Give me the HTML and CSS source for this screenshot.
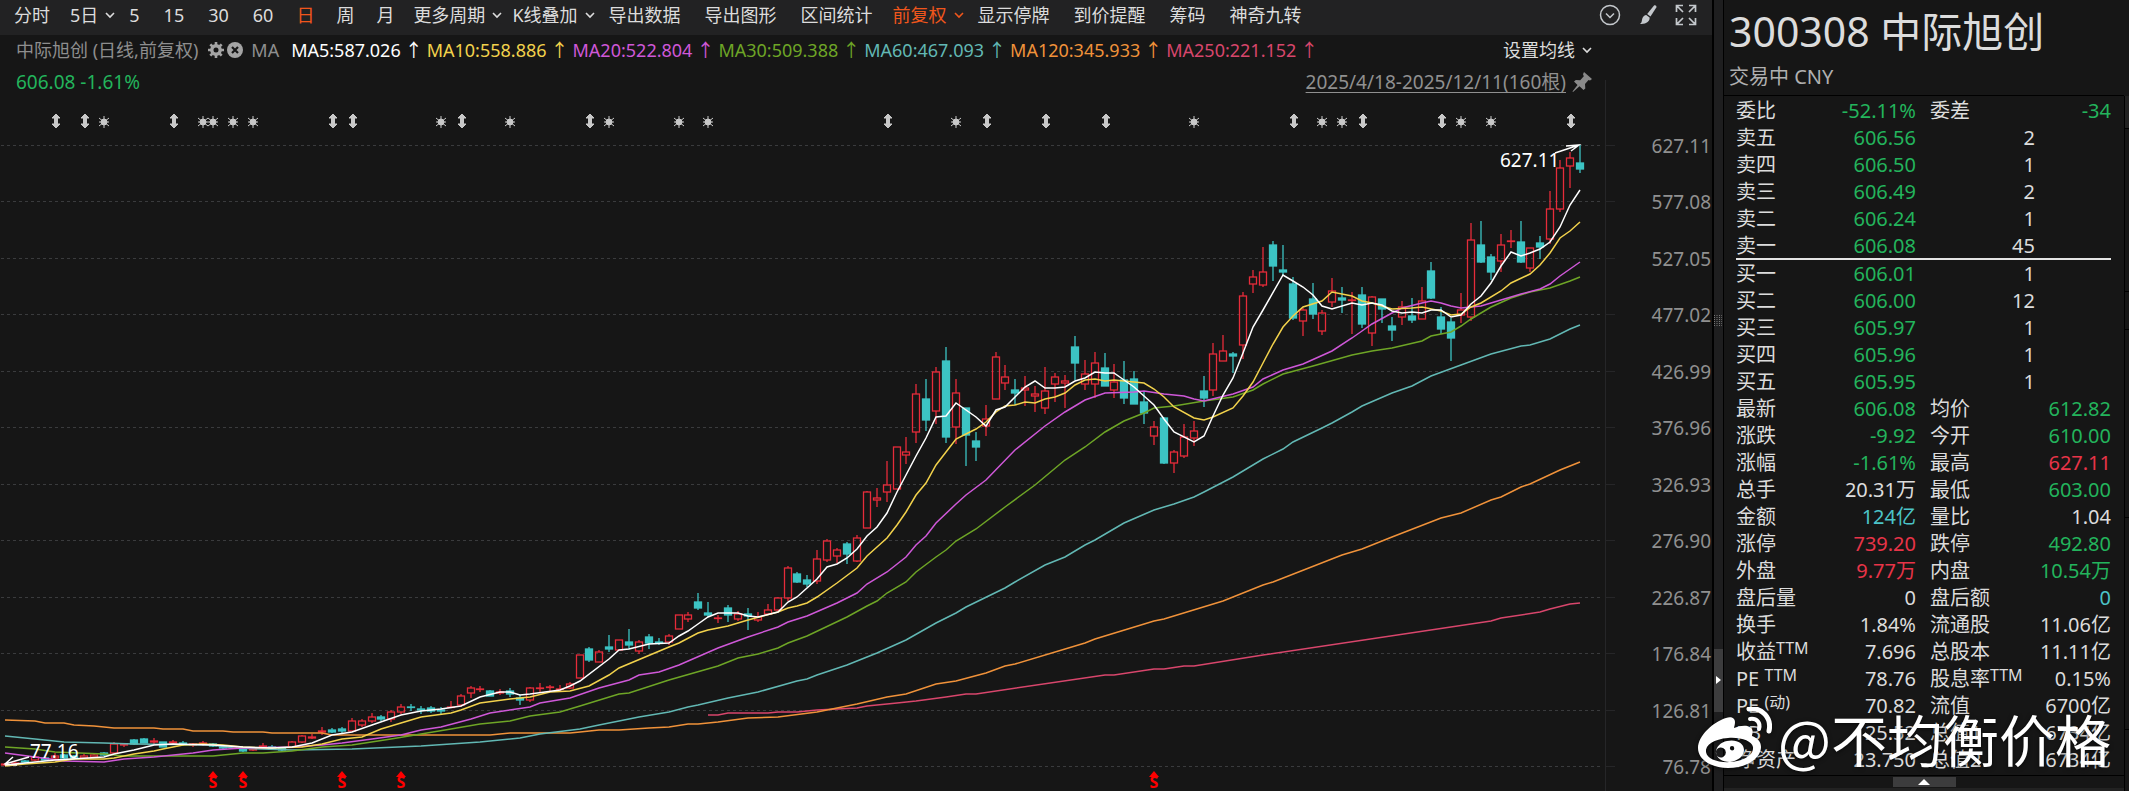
FILE: index.html
```html
<!DOCTYPE html>
<html lang="zh-CN">
<head>
<meta charset="UTF-8">
<title>300308 中际旭创</title>
<link rel="stylesheet" href="styles.css">
</head>
<body>
<svg class="defs" aria-hidden="true">
  <symbol id="chev" viewBox="0 0 10 10"><path d="M1 3l4 4 4-4" fill="none" stroke="currentColor" stroke-width="1.6"/></symbol>
</svg>
<div class="app">
  <main class="chart">
    <nav class="toolbar">
      <button class="tab">分时</button>
      <button class="tab drop">5日<svg class="chev"><use href="#chev"/></svg></button>
      <button class="tab">5</button>
      <button class="tab">15</button>
      <button class="tab">30</button>
      <button class="tab">60</button>
      <button class="tab period active">日</button>
      <button class="tab period">周</button>
      <button class="tab period">月</button>
      <button class="tab drop">更多周期<svg class="chev"><use href="#chev"/></svg></button>
      <button class="tab drop">K线叠加<svg class="chev"><use href="#chev"/></svg></button>
      <button class="tab">导出数据</button>
      <button class="tab">导出图形</button>
      <button class="tab">区间统计</button>
      <button class="tab drop active">前复权<svg class="chev"><use href="#chev"/></svg></button>
      <button class="tab">显示停牌</button>
      <button class="tab">到价提醒</button>
      <button class="tab">筹码</button>
      <button class="tab">神奇九转</button>
      <div class="tools">
        <button class="tool" aria-label="更多">
          <svg viewBox="0 0 22 22" fill="none" stroke="currentColor" stroke-width="1.5"><circle cx="11" cy="11" r="9.5"/><path d="M7 9.5l4 4 4-4"/></svg>
        </button>
        <button class="tool" aria-label="画线">
          <svg viewBox="0 0 22 22" fill="currentColor"><path d="M17 1.5c1.5-.8 3 .5 2.3 2L13.5 12.5l-3.300-2.5z"/><path d="M9.2 11l3.4 2.6c.5 3.5-3.5 7-9.6 6.4 2.3-1.5 1.6-3.5 2.4-5.7.7-1.9 2.2-3 3.8-3.3z"/></svg>
        </button>
        <button class="tool" aria-label="全屏">
          <svg viewBox="0 0 22 22" fill="none" stroke="currentColor" stroke-width="1.7"><path d="M1.5 8V1.5H8M2 2l6 6M14 1.5h6.5V8M20 2l-6 6M1.5 14v6.500H8M2 20l6-6M14 20.5h6.5V14M20 20l-6-6"/></svg>
        </button>
      </div>
    </nav>

    <div class="ma-row">
      <span class="name">中际旭创 (日线,前复权)</span>
      <button class="mini" aria-label="设置">
        <svg viewBox="0 0 16 16"><circle cx="8" cy="8" r="4.2" fill="none" stroke="currentColor" stroke-width="3.4"/><path d="M8 0v3M8 13v3M0 8h3M13 8h3M2.3 2.3l2.2 2.2M11.5 11.5l2.2 2.2M2.3 13.7l2.2-2.2M11.5 4.5l2.2-2.2" stroke="currentColor" stroke-width="2.6"/></svg>
      </button>
      <button class="mini" aria-label="关闭">
        <svg viewBox="0 0 16 16"><circle cx="8" cy="8" r="8" fill="currentColor"/><path d="M5 5l6 6M11 5l-6 6" stroke="#161616" stroke-width="2.2"/></svg>
      </button>
      <span class="ma-name">MA</span>
      <span class="ma5">MA5:587.026<i>↑</i></span>
      <span class="ma10">MA10:558.886<i>↑</i></span>
      <span class="ma20">MA20:522.804<i>↑</i></span>
      <span class="ma30">MA30:509.388<i>↑</i></span>
      <span class="ma60">MA60:467.093<i>↑</i></span>
      <span class="ma120">MA120:345.933<i>↑</i></span>
      <span class="ma250">MA250:221.152<i>↑</i></span>
      <button class="set-ma">设置均线<svg class="chev"><use href="#chev"/></svg></button>
    </div>

    <div class="info-row">
      <span class="down">606.08 -1.61%</span>
      <a class="range" href="#range">2025/4/18-2025/12/11(160根)</a>
      <svg class="pin" viewBox="0 0 20 20"><path d="M12 0l8 7-2 1.5-1.5-.5-3.5 4 .3 4.5-1.8 1.5-4-3.800L1 20l-.5-.5 5-6.5L2 9.5 3.8 8l4.4.2 3.6-4-.8-2z" fill="currentColor"/></svg>
    </div>

    <svg class="stage" id="stage"></svg>
  </main>

  <div class="splitter">
    <svg class="grip" viewBox="0 0 8 12"><path d="M.5 0v12M3 0v12M5.5 0v12M7.8 0v12" stroke="#777" stroke-dasharray="1 1"/></svg>
    <button class="fold" aria-label="收起侧栏"><svg viewBox="0 0 5 8"><path d="M0 0l5 4-5 4z" fill="#fff"/></svg></button>
  </div>

  <aside class="panel">
    <header class="head">
      <h1>300308 中际旭创</h1>
      <p>交易中 CNY</p>
    </header>
    <div class="quotes">
      <table class="quote">
        <colgroup><col class="c1"><col class="c2"><col class="c3"><col class="c4"></colgroup>
        <tbody>
          <tr><th>委比</th><td class="down">-52.11%</td><th>委差</th><td class="down">-34</td></tr>
          <tr><th>卖五</th><td class="down">606.56</td><td class="vol" colspan="2">2</td></tr>
          <tr><th>卖四</th><td class="down">606.50</td><td class="vol" colspan="2">1</td></tr>
          <tr><th>卖三</th><td class="down">606.49</td><td class="vol" colspan="2">2</td></tr>
          <tr><th>卖二</th><td class="down">606.24</td><td class="vol" colspan="2">1</td></tr>
          <tr><th>卖一</th><td class="down">606.08</td><td class="vol" colspan="2">45</td></tr>
        </tbody>
      </table>
      <table class="quote bids">
        <colgroup><col class="c1"><col class="c2"><col class="c3"><col class="c4"></colgroup>
        <tbody>
          <tr><th>买一</th><td class="down">606.01</td><td class="vol" colspan="2">1</td></tr>
          <tr><th>买二</th><td class="down">606.00</td><td class="vol" colspan="2">12</td></tr>
          <tr><th>买三</th><td class="down">605.97</td><td class="vol" colspan="2">1</td></tr>
          <tr><th>买四</th><td class="down">605.96</td><td class="vol" colspan="2">1</td></tr>
          <tr><th>买五</th><td class="down">605.95</td><td class="vol" colspan="2">1</td></tr>
          <tr><th>最新</th><td class="down">606.08</td><th>均价</th><td class="down">612.82</td></tr>
          <tr><th>涨跌</th><td class="down">-9.92</td><th>今开</th><td class="down">610.00</td></tr>
          <tr><th>涨幅</th><td class="down">-1.61%</td><th>最高</th><td class="up">627.11</td></tr>
          <tr><th>总手</th><td>20.31万</td><th>最低</th><td class="down">603.00</td></tr>
          <tr><th>金额</th><td class="cyan">124亿</td><th>量比</th><td>1.04</td></tr>
          <tr><th>涨停</th><td class="up">739.20</td><th>跌停</th><td class="down">492.80</td></tr>
          <tr><th>外盘</th><td class="up">9.77万</td><th>内盘</th><td class="down">10.54万</td></tr>
          <tr><th>盘后量</th><td>0</td><th>盘后额</th><td class="cyan">0</td></tr>
          <tr><th>换手</th><td>1.84%</td><th>流通股</th><td>11.06亿</td></tr>
          <tr><th>收益<sup>TTM</sup></th><td>7.696</td><th>总股本</th><td>11.11亿</td></tr>
          <tr><th>PE <sup>TTM</sup></th><td>78.76</td><th>股息率<sup>TTM</sup></th><td>0.15%</td></tr>
          <tr><th>PE <sup>(动)</sup></th><td>70.82</td><th>流值</th><td>6700亿</td></tr>
          <tr><th>PB</th><td>25.52</td><th>总值1</th><td>6734亿</td></tr>
          <tr><th>净资产</th><td>23.750</td><th>总值2</th><td>6734亿</td></tr>
        </tbody>
      </table>
    </div>
    <div class="drawer">
      <button class="pull" aria-label="展开"><svg viewBox="0 0 12 6"><path d="M0 6l6-6 6 6z" fill="#fff"/></svg></button>
    </div>
  </aside>

  <div class="edge"><span></span><span></span><span></span><span></span><span></span></div>

  <div class="watermark">
    <svg viewBox="0 0 74 62">
      <path fill="#fff" fill-rule="evenodd" d="M28 11c5-2 9 0 9 4 0 3-1 5-1 6 5-2 13-4 17 0 3 3 1 6 1 8 5 2 9 5 9 11 0 11-14 21-33 21C14 61 0 53 0 41c0-12 15-26 28-30zM30 31C16 32 7 38 8 45s12 11 25 10c14-1 23-8 22-15-1-6-12-10-25-9z"/>
      <path fill="#fff" fill-rule="evenodd" d="M29 34c9-2 17 2 17 9 0 6-6 11-14 12-8 0-14-4-14-10 0-5 5-10 11-11zM25 41a5 5 0 1 0 .1 9 5 5 0 0 0-.1-9zM34 39a2.2 2.2 0 1 0 .1 4.4 2.2 2.2 0 0 0-.1-4.4z"/>
      <path fill="none" stroke="#fff" stroke-width="5" stroke-linecap="round" d="M51 2c13-2 23 9 20 22"/>
      <path fill="none" stroke="#fff" stroke-width="4" stroke-linecap="round" d="M52 12c7-1 11 4 9 10"/>
    </svg>
    <span>@不均衡价格</span>
  </div>
</div>
<script src="chart.js"></script>
</body>
</html>
```
FILE: styles.css
```css
* {
  box-sizing: border-box;
}
body {
  margin: 0;
  background: #161616;
  color: #dcdcdc;
  font-family: "Noto Sans", "Noto Sans CJK SC", sans-serif;
  font-size: 18px;
  overflow: hidden;
}
button {
  border: none;
  background: none;
  padding: 0;
  color: inherit;
  font: inherit;
  cursor: pointer;
}
.defs {
  display: none;
}
.app {
  position: relative;
  display: flex;
  height: 100vh;
}
.down { color: #23b45c; }
.up { color: #e83448; }
.cyan { color: #4cc4c8; }

/* chart side */
.chart {
  flex: 1;
  min-width: 0;
  display: flex;
  flex-direction: column;
  border-right: 1px solid #000;
}
.toolbar {
  display: flex;
  flex: none;
  height: 35px;
  padding: 0 15px 5px 2px;
  background: #222223;
}
.tab {
  display: flex;
  align-items: center;
  padding: 0 12px;
  line-height: 30px;
  white-space: nowrap;
}
.tab.drop {
  padding: 0 2px 0 8px;
}
.tab.period {
  padding: 0 11px;
}
.tab.active {
  color: #f0561c;
}
.chev {
  width: 10px;
  height: 10px;
  margin-left: 7px;
}
.tools {
  display: flex;
  align-items: center;
  gap: 16px;
  margin-left: auto;
  color: #c4c8cc;
}
.tool, .tool svg {
  display: block;
  width: 22px;
  height: 22px;
}
.ma-row {
  display: flex;
  flex: none;
  align-items: center;
  height: 30px;
  padding: 0 120px 0 16px;
  line-height: 30px;
  white-space: nowrap;
}
.name, .ma-name {
  color: #8e8e8e;
}
.name {
  margin-right: 10px;
}
.mini {
  margin-right: 3px;
  color: #a4a4a4;
}
.mini svg {
  display: block;
  width: 16px;
  height: 16px;
}
.ma-name {
  margin: 0 12px 0 5px;
}
.ma-row i {
  display: inline-block;
  width: 26px;
  text-align: center;
  font-style: normal;
}
.ma5 { color: #fff; }
.ma10 { color: #f2d24c; }
.ma20 { color: #cf58d8; }
.ma30 { color: #6ea526; }
.ma60 { color: #62b8b4; }
.ma120 { color: #f0923a; }
.ma250 { color: #d8466c; }
.set-ma {
  display: flex;
  align-items: center;
  margin-left: auto;
}
.info-row {
  display: flex;
  flex: none;
  align-items: center;
  height: 34px;
  padding: 0 120px 0 16px;
  font-size: 19px;
  line-height: 34px;
}
.range {
  margin-left: auto;
  color: #909090;
  text-underline-offset: 3px;
}
.pin {
  width: 20px;
  height: 20px;
  margin-left: 6px;
  color: #8a8a8a;
}
.stage {
  display: block;
  flex: 1;
  width: 100%;
  min-height: 0;
  overflow: visible;
}
.stage text {
  font-size: 19px;
}
.stage .axis {
  fill: #909090;
  text-anchor: end;
}
.stage .note {
  fill: #fff;
}
.stage .split {
  fill: #f00;
  font-size: 16px;
  font-weight: bold;
  text-anchor: middle;
}
.stage polyline {
  fill: none;
  stroke: currentColor;
  stroke-width: 1.5;
}
.grid {
  stroke: #3a3b3d;
  stroke-dasharray: 3 3;
}
.frame {
  stroke: #262628;
}
.rise {
  fill: none;
  stroke: #e62c3a;
  stroke-width: 1.3;
}
.fall {
  fill: #3cc4c4;
  stroke: #3cc4c4;
  stroke-width: 1.3;
}
.arrow {
  fill: none;
  stroke: #fff;
  stroke-width: 1.5;
}
.event {
  fill: #c8c8c8;
  stroke: #c8c8c8;
}
.tri {
  fill: #f00;
}

/* splitter */
.splitter {
  position: relative;
  flex: none;
  width: 11px;
  background: #1e1e1f;
  border-left: 1px solid #000;
  border-right: 1px solid #000;
}
.grip {
  position: absolute;
  top: 315px;
  left: 0;
  width: 8px;
  height: 12px;
}
.fold {
  position: absolute;
  top: 82%;
  left: 0;
  width: 9px;
  height: 63px;
  background: #3c3c3d;
}
.fold svg {
  display: block;
  width: 5px;
  height: 8px;
  margin: 0 2px;
}

/* quote panel */
.panel {
  display: flex;
  flex-direction: column;
  flex: none;
  width: 400px;
}
.head {
  height: 96px;
  padding: 0 5px;
  border-bottom: 1px solid #000;
}
.head h1 {
  margin: 0;
  font-size: 41px;
  font-weight: normal;
  line-height: 62px;
  white-space: nowrap;
}
.head p {
  margin: 0;
  color: #b0b0b0;
  font-size: 20px;
  line-height: 30px;
}
.quotes {
  flex: 1;
  min-height: 0;
  padding: 1px 13px 0 12px;
}
.quote {
  width: 100%;
  table-layout: fixed;
  border-collapse: separate;
  border-spacing: 0;
  font-size: 20px;
  line-height: 27px;
}
.bids {
  margin-top: -1px;
  border-top: 2px solid #e4e4e4;
}
.c1 { width: 22%; }
.c2 { width: 26%; }
.c3 { width: 30%; }
.c4 { width: 22%; }
.quote th, .quote td {
  height: 27px;
  padding: 0;
  font-weight: normal;
  white-space: nowrap;
}
.quote th {
  text-align: left;
}
.quote td {
  text-align: right;
}
.quote td + th {
  padding-left: 14px;
}
.quote .vol {
  padding-right: 76px;
}
.quote sup {
  font-size: 16px;
  line-height: 1px;
  vertical-align: 5px;
}
.drawer {
  flex: none;
  height: 16px;
  border-top: 1px solid #000;
  border-bottom: 3px solid #222;
  text-align: center;
}
.pull {
  display: block;
  width: 63px;
  height: 10px;
  margin: 1px auto;
  background: #3c3c3d;
}
.pull svg {
  display: block;
  width: 12px;
  height: 6px;
  margin: auto;
}
.edge {
  flex: none;
  display: grid;
  grid-template-rows: 33fr 163fr 38fr 188fr 212fr 61fr;
  width: 5px;
  margin-top: 96px;
  border-left: 1px solid #000;
}
.edge span {
  border-bottom: 1px solid #000;
}
.edge span:first-child {
  background: #222;
}

.watermark {
  position: absolute;
  right: 18px;
  bottom: 18px;
  display: flex;
  align-items: center;
  gap: 6px;
  color: #fff;
  font-family: "Noto Sans CJK SC", sans-serif;
  font-size: 56px;
  line-height: 70px;
  filter: drop-shadow(0 1px 2px rgba(0, 0, 0, 0.6));
}
.watermark svg {
  width: 74px;
  height: 62px;
}
```
FILE: chart.js
```javascript
// [rise, high, top, bottom, low], one row per day
const candles = [
  [1,763,764,765,766],[1,762,763,764,765],[0,760,761,762,764],[1,756,757,760,761],[0,757,758,760,761],
  [1,753,756,758,760],[0,754,755,758,759],[0,755,756,758,760],[1,754,756,758,759],[1,753,755,757,758],
  [0,752,753,755,756],[1,742,744,753,753],[1,743,744,745,747],[0,739,740,744,745],[0,738,739,743,743],
  [1,738,741,742,745],[0,742,742,747,747],[1,740,742,743,745],[0,741,743,744,746],[1,743,744,745,747],
  [1,741,743,744,746],[0,743,744,746,747],[0,745,747,748,749],[1,746,747,748,749],[0,748,749,751,752],
  [1,747,749,750,751],[1,743,746,747,748],[0,745,747,748,749],[0,747,748,750,751],[1,741,742,747,748],
  [1,735,736,742,743],[1,734,737,738,739],[1,727,731,732,735],[0,728,730,732,733],[0,727,729,731,733],
  [1,718,721,731,732],[1,719,721,725,727],[1,713,717,721,723],[0,715,717,719,721],[1,710,712,719,722],
  [1,704,707,712,714],[0,704,707,707,711],[0,706,709,710,714],[0,706,708,711,713],[0,707,710,711,714],
  [1,701,707,707,708],[1,694,696,705,707],[1,686,688,693,698],[1,686,689,689,692],[0,690,691,696,696],
  [1,689,692,693,695],[0,688,691,694,697],[0,695,698,700,705],[1,687,688,700,702],[1,683,688,688,692],
  [1,685,687,687,692],[1,685,689,689,691],[1,682,684,688,689],[1,655,655,678,678],[0,647,649,660,662],
  [1,650,652,662,662],[0,635,647,649,652],[1,640,640,650,650],[0,629,642,645,649],[1,640,642,651,654],
  [0,634,637,643,649],[0,638,642,643,645],[1,634,636,642,645],[1,615,615,629,629],[1,612,615,619,622],
  [0,593,602,608,610],[0,602,613,615,617],[1,615,618,618,623],[0,605,608,615,622],[1,611,614,619,621],
  [0,608,614,616,630],[1,612,617,620,622],[1,604,610,614,615],[1,597,598,610,611],[1,566,568,598,601],
  [0,572,574,582,583],[0,575,580,584,587],[1,550,559,581,584],[1,539,541,560,562],[1,548,550,556,563],
  [0,542,544,554,564],[1,535,538,561,562],[1,491,492,528,528],[1,488,498,500,507],[1,461,485,492,502],
  [1,447,447,489,489],[1,437,452,455,464],[1,384,394,432,443],[0,379,399,420,431],[1,367,372,411,424],
  [0,347,361,437,443],[1,379,393,427,444],[0,408,408,435,466],[0,432,441,447,461],[1,405,419,426,436],
  [1,352,357,399,399],[1,365,377,383,390],[0,379,390,393,405],[1,376,388,390,406],[1,386,394,396,412],
  [1,367,391,408,414],[1,373,377,384,402],[1,375,381,383,408],[0,336,347,363,380],[1,360,374,384,390],
  [1,352,363,384,398],[0,353,368,386,386],[1,364,382,390,398],[0,361,380,398,404],[0,371,379,404,404],
  [0,392,402,413,424],[1,421,427,436,445],[0,417,418,463,464],[1,450,452,463,473],[1,424,437,456,458],
  [1,421,431,438,446],[0,376,391,398,407],[1,343,354,390,396],[1,335,351,361,361],[0,352,354,356,373],
  [1,292,296,345,359],[1,270,277,284,293],[1,247,272,285,287],[0,241,245,266,281],[0,245,270,272,275],
  [0,277,284,318,320],[1,308,310,321,336],[0,283,299,314,319],[1,310,313,331,335],[1,278,291,302,307],
  [0,287,298,300,313],[1,292,300,300,334],[0,287,295,324,328],[1,296,297,333,346],[0,299,299,309,323],
  [0,317,326,330,341],[1,301,307,317,325],[0,298,316,320,323],[1,287,301,319,319],[0,262,271,298,299],
  [0,307,317,329,334],[0,318,322,338,361],[1,293,310,315,323],[1,223,240,317,321],[0,221,245,262,263],
  [0,254,257,272,280],[1,234,245,261,272],[1,230,241,241,248],[0,221,242,262,263],[1,248,248,268,272],
  [0,236,243,247,259],[1,191,209,239,244],[1,160,168,209,212],[1,152,158,166,188],[0,145,163,169,173]
];

// moving averages: day, y
const lines = {
  ma250: '71,715 72,715 73,713 77,713 78,712 80,712 82,710 86,708 87,706 89,704 90,703 92,701 95,697 97,694 98,694 111,675 112,675 116,669 117,669 119,666 120,666 127,655 150,621 151,618 155,612 156,609 158,604 159,603',
  ma120: '0,720 3,721 4,723 6,723 7,725 9,726 11,728 15,728 16,729 18,729 19,731 22,731 23,732 26,732 27,733 32,733 33,735 49,735 50,734 51,733 57,733 58,732 60,730 62,730 65,728 67,727 69,724 70,724 72,722 75,718 78,717 82,712 86,704 89,697 91,694 94,684 96,681 99,673 101,666 102,664 109,643 110,639 116,621 117,619 123,601 127,585 128,582 135,555 137,549 140,537 145,518 147,513 150,500 151,497 153,487 154,484 157,470 159,462',
  ma60: '0,736 3,739 6,742 10,743 13,744 21,745 23,748 29,750 35,749 42,746 48,742 50,740 52,738 54,734 58,729 60,725 63,719 64,717 67,712 69,707 70,705 73,698 76,692 80,681 81,679 82,675 85,665 88,653 91,640 94,623 96,613 97,607 101,588 102,582 105,565 107,557 109,545 110,540 113,523 116,510 118,504 120,497 121,492 124,477 127,459 129,449 130,442 133,428 134,423 136,412 137,406 140,393 142,386 144,376 147,365 150,354 153,346 154,345 156,339 158,329 159,325',
  ma30: '0,747 3,749 5,752 10,754 12,756 21,756 24,753 26,753 29,751 32,747 35,745 39,739 42,734 45,729 48,724 51,721 53,716 56,712 58,706 62,694 63,693 67,680 72,666 74,658 76,654 78,648 79,643 81,636 85,617 87,606 88,601 89,593 91,582 92,572 94,557 95,550 96,541 98,529 101,507 104,485 107,460 109,447 111,432 113,421 115,413 116,408 118,406 121,401 124,397 126,390 127,384 129,374 132,366 136,355 138,351 140,348 143,341 144,336 146,332 147,326 148,319 150,307 152,298 154,292 156,288 158,281 159,277',
  ma20: '0,753 3,757 6,761 10,762 12,759 15,757 19,753 21,750 24,748 29,747 32,745 34,743 37,739 40,735 42,730 44,727 47,719 49,713 53,707 54,703 57,698 60,688 63,680 64,675 66,672 68,665 72,648 75,637 78,627 79,622 81,616 84,603 86,593 87,584 89,572 91,557 92,545 93,536 94,523 96,504 97,495 99,480 102,450 105,426 107,412 109,400 111,393 114,392 115,391 117,394 119,396 120,399 121,401 124,394 126,387 127,379 129,370 131,364 134,351 136,338 137,331 138,324 140,313 141,308 143,303 144,301 145,303 146,306 147,308 149,306 151,300 153,294 155,289 156,284 157,276 158,269 159,262',
  ma10: '0,766 2,764 5,762 7,759 10,759 11,758 13,754 15,751 16,749 18,745 20,744 22,745 24,747 27,748 30,747 32,744 34,739 36,737 38,729 40,723 42,717 45,713 46,710 48,703 51,699 53,697 55,692 57,691 59,686 61,675 62,668 67,647 68,643 70,633 71,630 73,626 75,620 78,612 79,608 80,606 81,603 82,597 84,583 86,568 87,556 88,547 89,538 90,525 91,512 92,495 93,483 94,465 95,452 96,439 97,434 98,429 99,422 100,412 101,406 102,405 103,402 104,403 105,399 106,397 107,393 108,385 109,380 110,379 111,381 112,380 113,381 115,383 116,389 117,397 118,407 120,418 121,420 122,417 124,408 125,396 126,382 127,363 128,344 129,327 130,316 131,307 133,301 134,292 136,296 137,301 138,303 140,309 142,308 143,307 145,311 146,315 147,314 148,307 149,303 151,291 152,283 154,274 155,265 156,253 157,238 158,231 159,222',
  ma5: '0,765 2,763 5,760 10,757 11,754 13,750 15,745 17,744 21,745 24,747 27,748 29,747 31,743 33,735 35,732 37,725 40,715 42,711 44,709 46,706 48,697 50,692 51,692 52,695 53,694 56,690 57,686 58,681 61,659 62,650 63,649 65,644 67,643 68,636 69,631 70,624 71,617 72,613 74,613 75,616 76,617 78,612 79,602 80,597 81,588 82,579 83,567 84,564 85,558 86,549 87,536 88,527 89,513 90,492 91,475 92,456 93,438 94,417 95,416 96,403 98,417 99,426 100,410 101,407 102,397 103,387 104,381 105,388 106,388 107,387 108,381 109,378 110,372 111,373 112,373 113,380 114,387 115,396 116,405 117,419 118,432 120,442 121,436 122,416 123,395 124,378 125,353 126,327 127,310 129,275 130,281 131,287 132,295 133,306 134,309 136,303 137,305 138,303 139,305 140,311 141,313 142,312 143,313 144,310 145,310 146,317 147,315 148,304 149,296 150,283 151,266 152,252 153,256 154,253 155,249 156,242 157,227 158,205 159,190'
};

const arrowDays = [5, 8, 17, 33, 35, 46, 59, 89, 99, 105, 111, 130, 137, 145, 158];
const starDays = [10, 20, 21, 23, 25, 44, 51, 61, 68, 71, 96, 120, 133, 135, 147, 150];
const splitDays = [21, 24, 34, 40, 116];

const top0 = 99;
const stage = document.getElementById('stage');

function draw() {
  const w = stage.clientWidth;
  const h = stage.clientHeight;
  const plot = w - 107;
  const step = (plot - 30) / 159;
  const x = i => Math.round(5 + i * step);
  let out = '';

  for (let k = 0; k < 12; k++) {
    const y = Math.round(145 + k * 56.45) + 0.5;
    out += `<path class="grid" d="M1 ${y}H${plot - 5}"/><path class="frame" d="M${plot} ${y}h10"/>`;
    out += `<text class="axis" x="${w - 1}" y="${y + 7}">${(627.11 - k * 50.03).toFixed(2)}</text>`;
  }
  out += `<path class="frame" d="M${plot + 0.5} 80V${top0 + h}"/>`;

  candles.forEach(([rise, hi, t, b, lo], i) => {
    const c = x(i);
    out += `<g class="${rise ? 'rise' : 'fall'}">`;
    out += `<path d="M${c} ${hi}V${t}M${c} ${b}V${lo}"/>`;
    out += `<rect x="${c - 3.5}" y="${t}" width="7" height="${Math.max(b - t, 0.5)}"/></g>`;
  });

  for (const name in lines) {
    const pts = lines[name].split(' ').map(p => {
      const [i, y] = p.split(',');
      return x(+i) + ',' + y;
    });
    out += `<polyline class="${name}" points="${pts.join(' ')}"/>`;
  }

  arrowDays.forEach(i => {
    out += `<path class="event" transform="translate(${x(i) + 1} 121)" d="M0-7l4 4h-2.500v6h2.500l-4 4-4-4h2.500v-6h-2.500z"/>`;
  });
  starDays.forEach(i => {
    out += `<g class="event" transform="translate(${x(i)} 122)"><circle r="3"/><path d="M0-6V6M-5-4L5 4M-5 4L5-4M-5 0H5"/></g>`;
  });
  splitDays.forEach(i => {
    out += `<path class="tri" d="M${x(i)} 771l5 6h-10z"/><text class="split" x="${x(i)}" y="788">S</text>`;
  });

  out += `<text class="note" x="30" y="758">77.16</text><path class="arrow" d="M29 757L5 764M13 757L5 764L17 765"/>`;
  const tip = x(159) - 1;
  out += `<text class="note" x="${tip - 79}" y="167">627.11</text><path class="arrow" d="M${tip - 24} 153L${tip} 145M${tip - 13} 146L${tip} 145L${tip - 8} 151"/>`;

  stage.setAttribute('viewBox', `0 ${top0} ${w} ${h}`);
  stage.innerHTML = out;
}

draw();
window.addEventListener('resize', draw);
```
